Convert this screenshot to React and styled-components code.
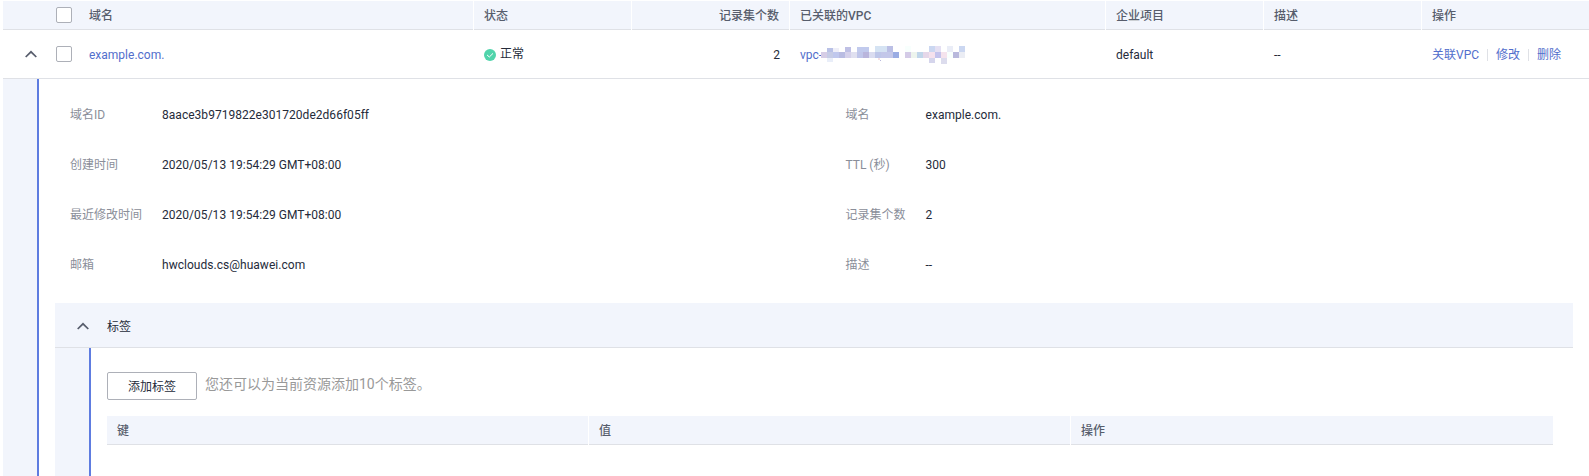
import React from "react";
import styled, { createGlobalStyle } from "styled-components";

const GlobalStyle = createGlobalStyle`
  * { box-sizing: border-box; }
  body {
    margin: 0;
    background: #fff;
    color: #252b3a;
    font: 12px/18px Roboto, "Noto Sans CJK SC", sans-serif;
    overflow: hidden;
  }
`;

const Page = styled.main`
  height: 476px;
  padding: 1px 0 0 3px;
  display: flex;
  flex-direction: column;
  overflow: hidden;
`;

const columns = "43px 33px 395px 158px 158px 316px 158px 158px 1fr";

const HeaderRow = styled.div`
  display: grid;
  grid-template-columns: ${columns};
  grid-template-rows: 28px;
  height: 29px;
  flex: none;
  background: #f2f5fc;
  border-bottom: 1px solid #dfe1e6;
`;

const DataRow = styled.div`
  display: grid;
  grid-template-columns: ${columns};
  height: 49px;
  flex: none;
  border-bottom: 1px solid #dfe1e6;
`;

const HeadCell = styled.div`
  display: flex;
  align-items: center;
  justify-content: ${(p) => (p.$end ? "flex-end" : "flex-start")};
  height: 29px;
  padding: 2px 10px 1px;
  border-right: ${(p) => (p.$divided ? "1px solid #fff" : "0")};
  color: #575d6c;
  font-weight: 500;
`;

const Cell = styled.div`
  display: flex;
  align-items: center;
  justify-content: ${(p) => (p.$end ? "flex-end" : "flex-start")};
  padding: 2px 10px 0;
  white-space: nowrap;
`;

const IconCell = styled.div`
  display: flex;
  align-items: center;
  padding-left: ${(p) => p.$left ?? 0}px;
`;

const Checkbox = styled.span`
  width: 16px;
  height: 16px;
  flex: none;
  border: 1px solid #adb0b8;
  border-radius: 2px;
  background: #fff;
`;

const Link = styled.a`
  color: #526ecc;
`;

const Status = styled.span`
  display: flex;
  align-items: center;
  gap: 4px;
`;

const StatusText = styled.span`
  padding-bottom: 3px;
`;

const Actions = styled.div`
  display: flex;
  align-items: center;
`;

const Separator = styled.i`
  width: 1px;
  height: 12px;
  margin: 0 8px;
  background: #dfe1e6;
`;

const Expanded = styled.section`
  display: flex;
  flex: 1;
`;

const Rail = styled.div`
  width: 36px;
  flex: none;
  background: #f2f5fc;
  border-right: 2px solid #5e7ce0;
`;

const Content = styled.div`
  flex: 1;
  display: flex;
  flex-direction: column;
  padding: 11px 16px 0;
`;

const Details = styled.div`
  display: grid;
  grid-template-columns: 775.5px 1fr;
  padding-left: 15px;
  margin-bottom: 13px;
`;

const DetailList = styled.dl`
  display: grid;
  grid-template-columns: ${(p) => p.$label}px 1fr;
  grid-auto-rows: 50px;
  align-items: center;
  margin: 0;
`;

const Term = styled.dt`
  color: #8a8e99;
`;

const Value = styled.dd`
  margin: 0;
  letter-spacing: 0.03px;
`;

const PanelHeader = styled.div`
  display: flex;
  align-items: center;
  gap: 18px;
  height: 45px;
  flex: none;
  padding: 1px 0 0 22px;
  background: #f2f5fc;
  border-bottom: 1px solid #dfe1e6;
`;

const PanelTitle = styled.span`
  padding-top: 2px;
`;

const PanelBody = styled.div`
  flex: 1;
  display: flex;
`;

const TagArea = styled.div`
  flex: 1;
  padding: 24px 20px 0 16px;
`;

const Toolbar = styled.div`
  display: flex;
  align-items: flex-start;
  gap: 8px;
  margin-bottom: 16px;
`;

const Button = styled.button`
  width: 90px;
  height: 28px;
  padding: 1px 0 0;
  border: 1px solid #adb0b8;
  border-radius: 2px;
  background: #fff;
  color: #252b3a;
  font: inherit;
`;

const Hint = styled.span`
  color: #999;
  font-size: 14px;
  line-height: 24px;
`;

const TagHeader = styled.div`
  display: grid;
  grid-template-columns: repeat(3, 1fr);
  height: 29px;
  background: #f2f5fc;
  border-bottom: 1px solid #dfe1e6;
`;

const Masked = styled.svg`
  display: block;
  flex: none;
  margin-left: -1px;
`;

const ChevronIcon = styled.svg`
  flex: none;
`;

const Chevron = () => (
  <ChevronIcon width="12" height="8" viewBox="0 0 12 8" fill="none" stroke="#575d6c" strokeWidth="1.7">
    <path d="M0.7 7 6 1.8 11.3 7" />
  </ChevronIcon>
);

const Ok = () => (
  <svg width="12" height="12" viewBox="0 0 12 12">
    <circle cx="6" cy="6" r="6" fill="#50d4ab" />
    <path d="M3 5.9 5.3 8 9 4.4" fill="none" stroke="#fff" strokeWidth="1" />
  </svg>
);

const cells = [
  [6, 2, 6, 4, "#b9c1e6"], [12, 2, 6, 4, "#efeff8"], [24, 1, 6, 5, "#bfc0e5"],
  [36, 1, 12, 5, "#c1caed"], [54, 0, 12, 6, "#d5e3f3"], [66, 0, 6, 6, "#bbbfe5"],
  [0, 6, 6, 6, "#d6cde6"], [6, 6, 6, 6, "#c6cce6"], [12, 6, 6, 6, "#c0c8ed"],
  [18, 6, 6, 6, "#b9bce2"], [24, 6, 6, 6, "#d5d1eb"], [30, 6, 6, 6, "#e0e0f0"],
  [36, 6, 6, 6, "#c0c6ea"], [42, 6, 6, 6, "#b9b5dc"], [48, 6, 6, 6, "#dadcf0"],
  [54, 6, 6, 6, "#bec6e9"], [60, 6, 12, 6, "#c3c7e9"], [72, 6, 6, 6, "#9aace3"],
  [6, 12, 6, 4, "#e9eef9"], [84, 0, 6, 6, "#f8fffd"], [84, 6, 6, 6, "#d4cbe7"],
  [90, 6, 6, 6, "#edf4ed"], [96, 6, 6, 6, "#c1d6ea"], [102, 6, 6, 6, "#e5d7e9"],
  [108, 0, 6, 6, "#cbd7f1"], [114, 0, 6, 6, "#e5e0f3"], [108, 6, 6, 6, "#f5e1ed"],
  [114, 6, 6, 6, "#c4c3ec"], [120, 6, 6, 6, "#f5e3ed"], [126, 0, 6, 6, "#eaedf7"],
  [126, 6, 6, 6, "#f8fffd"], [132, 6, 6, 6, "#b8b8dc"], [138, 0, 6, 6, "#cbd7f1"],
  [138, 6, 6, 6, "#ebedf4"], [108, 12, 6, 5, "#d5d5ec"], [120, 12, 6, 6, "#dcdced"],
  [57, 12, 2, 2, "#f5dfe3"], [59, 14, 1, 1, "#b8b8dc"],
];

const Mosaic = () => (
  <Masked width="144" height="18" viewBox="0 0 144 18" shapeRendering="crispEdges">
    {cells.map(([x, y, w, h, fill], i) => (
      <rect key={i} x={x} y={y} width={w} height={h} fill={fill} />
    ))}
  </Masked>
);

const left = [
  ["域名ID", "8aace3b9719822e301720de2d66f05ff"],
  ["创建时间", "2020/05/13 19:54:29 GMT+08:00"],
  ["最近修改时间", "2020/05/13 19:54:29 GMT+08:00"],
  ["邮箱", "hwclouds.cs@huawei.com"],
];
const right = [
  ["域名", "example.com."],
  ["TTL (秒)", "300"],
  ["记录集个数", "2"],
  ["描述", "--"],
];

const List = ({ items, label }) => (
  <DetailList $label={label}>
    {items.map(([term, value]) => (
      <React.Fragment key={term}>
        <Term>{term}</Term>
        <Value>{value}</Value>
      </React.Fragment>
    ))}
  </DetailList>
);

export default function App() {
  return (
    <Page>
      <GlobalStyle />
      <HeaderRow>
        <IconCell />
        <IconCell $left={10}><Checkbox /></IconCell>
        <HeadCell $divided>域名</HeadCell>
        <HeadCell $divided>状态</HeadCell>
        <HeadCell $divided $end>记录集个数</HeadCell>
        <HeadCell $divided>已关联的VPC</HeadCell>
        <HeadCell $divided>企业项目</HeadCell>
        <HeadCell $divided>描述</HeadCell>
        <HeadCell>操作</HeadCell>
      </HeaderRow>
      <DataRow>
        <IconCell $left={22}><Chevron /></IconCell>
        <IconCell $left={10}><Checkbox /></IconCell>
        <Cell><Link>example.com.</Link></Cell>
        <Cell><Status><Ok /><StatusText>正常</StatusText></Status></Cell>
        <Cell $end>2</Cell>
        <Cell><Link>vpc-</Link><Mosaic /></Cell>
        <Cell>default</Cell>
        <Cell>--</Cell>
        <Cell>
          <Actions>
            <Link>关联VPC</Link><Separator />
            <Link>修改</Link><Separator />
            <Link>删除</Link>
          </Actions>
        </Cell>
      </DataRow>
      <Expanded>
        <Rail />
        <Content>
          <Details>
            <List items={left} label={92} />
            <List items={right} label={80} />
          </Details>
          <PanelHeader><Chevron /><PanelTitle>标签</PanelTitle></PanelHeader>
          <PanelBody>
            <Rail />
            <TagArea>
              <Toolbar>
                <Button>添加标签</Button>
                <Hint>您还可以为当前资源添加10个标签。</Hint>
              </Toolbar>
              <TagHeader>
                <HeadCell $divided>键</HeadCell>
                <HeadCell $divided>值</HeadCell>
                <HeadCell>操作</HeadCell>
              </TagHeader>
            </TagArea>
          </PanelBody>
        </Content>
      </Expanded>
    </Page>
  );
}
